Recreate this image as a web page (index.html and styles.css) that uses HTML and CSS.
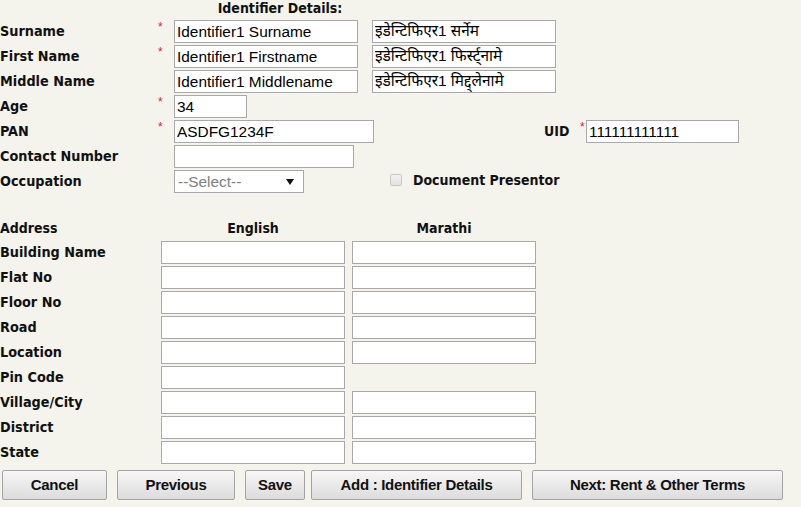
FILE: index.html
```html
<!DOCTYPE html>
<html lang="en">
<head>
  <meta charset="UTF-8">
  <title>Identifier Details</title>
  <link rel="stylesheet" href="styles.css">
</head>
<body>
  <div class="form">
    <div class="title">Identifier Details:</div>

    <div class="row">
      <label class="lbl">Surname</label><span class="req">*</span>
      <input class="txt w184" type="text" value="Identifier1 Surname">
      <input class="txt w184 mr" type="text" value="इडेन्टिफिएर1 सर्नेम">
    </div>
    <div class="row">
      <label class="lbl">First Name</label><span class="req">*</span>
      <input class="txt w184" type="text" value="Identifier1 Firstname">
      <input class="txt w184 mr" type="text" value="इडेन्टिफिएर1 फिर्स्ट्नामे">
    </div>
    <div class="row">
      <label class="lbl">Middle Name</label><span class="req"></span>
      <input class="txt w184" type="text" value="Identifier1 Middlename">
      <input class="txt w184 mr" type="text" value="इडेन्टिफिएर1 मिद्द्लेनामे">
    </div>
    <div class="row">
      <label class="lbl">Age</label><span class="req">*</span>
      <input class="txt w72" type="text" value="34">
    </div>
    <div class="row">
      <label class="lbl">PAN</label><span class="req">*</span>
      <input class="txt w199" type="text" value="ASDFG1234F">
      <label class="lbl-uid">UID</label><span class="req req-uid">*</span>
      <input class="txt w153" type="text" value="111111111111">
    </div>
    <div class="row">
      <label class="lbl">Contact Number</label><span class="req"></span>
      <input class="txt w179" type="text" value="">
    </div>
    <div class="row">
      <label class="lbl">Occupation</label><span class="req"></span>
      <span class="select-wrap">
        <select class="sel" disabled>
          <option>--Select--</option>
        </select>
      </span>
      <input class="chk" type="checkbox" disabled>
      <label class="lbl-chk">Document Presentor</label>
    </div>

    <div class="addr-head">
      <span class="addr-lbl">Address</span>
      <span class="addr-col">English</span>
      <span class="addr-col addr-col2">Marathi</span>
    </div>

    <div class="arow"><label class="alb">Building Name</label><input class="txt w184" type="text"><input class="txt w184 gap7" type="text"></div>
    <div class="arow"><label class="alb">Flat No</label><input class="txt w184" type="text"><input class="txt w184 gap7" type="text"></div>
    <div class="arow"><label class="alb">Floor No</label><input class="txt w184" type="text"><input class="txt w184 gap7" type="text"></div>
    <div class="arow"><label class="alb">Road</label><input class="txt w184" type="text"><input class="txt w184 gap7" type="text"></div>
    <div class="arow"><label class="alb">Location</label><input class="txt w184" type="text"><input class="txt w184 gap7" type="text"></div>
    <div class="arow"><label class="alb">Pin Code</label><input class="txt w184" type="text"></div>
    <div class="arow"><label class="alb">Village/City</label><input class="txt w184" type="text"><input class="txt w184 gap7" type="text"></div>
    <div class="arow"><label class="alb">District</label><input class="txt w184" type="text"><input class="txt w184 gap7" type="text"></div>
    <div class="arow"><label class="alb">State</label><input class="txt w184" type="text"><input class="txt w184 gap7" type="text"></div>

    <div class="buttons">
      <button class="btn b-cancel">Cancel</button>
      <button class="btn b-prev">Previous</button>
      <button class="btn b-save">Save</button>
      <button class="btn b-add">Add : Identifier Details</button>
      <button class="btn b-next">Next: Rent &amp; Other Terms</button>
    </div>
  </div>
</body>
</html>
```

FILE: styles.css
```css
body {
  margin: 0;
  background-color: #f4f3ec;
  font-family: "DejaVu Sans Condensed", "DejaVu Sans", sans-serif;
  color: #111;
}
.form {
  width: 801px;
}
.title {
  width: 560px;
  text-align: center;
  font-weight: bold;
  font-size: 14px;
  line-height: 16px;
  height: 16px;
  margin-bottom: 4px;
}
.row {
  display: flex;
  align-items: flex-start;
  height: 25px;
}
.lbl {
  width: 156px;
  font-weight: bold;
  font-size: 14.3px;
  line-height: 23px;
}
.req {
  width: 18px;
  color: #e0203a;
  font-family: "Liberation Sans", Arial, sans-serif;
  font-size: 12px;
  line-height: 14px;
  padding-left: 2px;
  box-sizing: border-box;
}
.txt {
  box-sizing: border-box;
  height: 23px;
  margin: 0;
  padding: 1px 2px;
  border: 1px solid #a9a9a9;
  background: #fff;
  font-family: "Liberation Sans", Arial, "Noto Sans Devanagari", "Noto Sans", sans-serif;
  font-size: 15.4px;
  color: #000;
  outline: none;
}
.w184 { width: 184px; }
.w72 { width: 73px; }
.w199 { width: 200px; }
.w153 { width: 153px; }
.w179 { width: 180px; }
.mr { margin-left: 14px; }
.gap7 { margin-left: 7px; }

.lbl-uid {
  margin-left: 170px;
  width: 36px;
  font-weight: bold;
  font-size: 14px;
  line-height: 23px;
}
.req-uid {
  width: 6px;
  padding-left: 0;
}

.select-wrap {
  position: relative;
  display: inline-block;
}
.sel {
  -webkit-appearance: none;
  appearance: none;
  box-sizing: border-box;
  width: 130px;
  height: 23px;
  margin: 0;
  padding: 0 3px;
  border: 1px solid #a9a9a9;
  border-radius: 0;
  background: #fff;
  font-family: "Liberation Sans", Arial, sans-serif;
  font-size: 15.4px;
  color: #808080;
  opacity: 1;
}
.select-wrap::after {
  content: "";
  position: absolute;
  right: 10px;
  top: 9px;
  border-left: 4px solid transparent;
  border-right: 4px solid transparent;
  border-top: 6px solid #111;
}
.chk {
  -webkit-appearance: none;
  appearance: none;
  box-sizing: border-box;
  width: 12px;
  height: 12px;
  margin: 4px 0 0 86px;
  border: 1px solid #c8c8c8;
  border-radius: 2px;
  background: linear-gradient(#f2f2f2, #e2e2e2);
}
.lbl-chk {
  margin-left: 11px;
  font-weight: bold;
  font-size: 14px;
  line-height: 21px;
}

.addr-head {
  display: flex;
  margin-top: 25px;
  height: 16px;
  line-height: 16px;
  margin-bottom: 5px;
  font-weight: bold;
  font-size: 14px;
}
.addr-lbl {
  width: 161px;
}
.addr-col {
  width: 184px;
  text-align: center;
}
.addr-col2 {
  margin-left: 7px;
}
.arow {
  display: flex;
  align-items: flex-start;
  height: 25px;
}
.alb {
  width: 161px;
  font-weight: bold;
  font-size: 14.3px;
  line-height: 23px;
}

.buttons {
  display: flex;
  margin-top: 4px;
  padding-left: 2px;
}
.btn {
  box-sizing: border-box;
  height: 30px;
  margin: 0;
  padding: 0 0 2px;
  border: 1px solid #a3a3a3;
  border-radius: 2px;
  background: linear-gradient(#f7f7f7, #dcdcdc);
  font-family: "Liberation Sans", Arial, sans-serif;
  font-weight: bold;
  font-size: 15px;
  letter-spacing: -0.3px;
  color: #111;
  cursor: pointer;
}
.btn:hover {
  background: linear-gradient(#fcfcfc, #e6e6e6);
}
.b-cancel { width: 105px; }
.b-prev { width: 118px; margin-left: 10px; }
.b-save { width: 60px; margin-left: 10px; }
.b-add { width: 211px; margin-left: 6px; }
.b-next { width: 251px; margin-left: 10px; }
```
